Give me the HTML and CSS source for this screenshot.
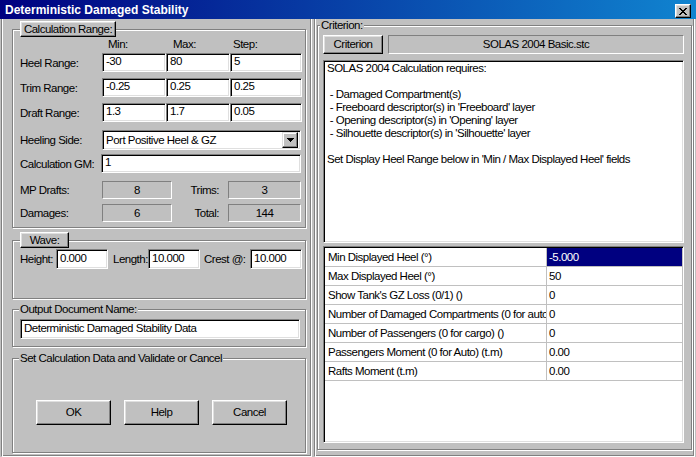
FILE: index.html
```html
<!DOCTYPE html>
<html>
<head>
<meta charset="utf-8">
<link rel="stylesheet" href="styles.css">
</head>
<body>
<div class="titlebar">
  <span class="title">Deterministic Damaged Stability</span>
  <span class="close"><svg width="8" height="7" viewBox="0 0 8 7" shape-rendering="crispEdges"><path d="M0 0h2v1H0zM6 0h2v1H6zM1 1h2v1H1zM5 1h2v1H5zM2 2h4v1H2zM3 3h2v1H3zM2 4h4v1H2zM1 5h2v1H1zM5 5h2v1H5zM0 6h2v1H0zM6 6h2v1H6z" fill="#000"/></svg></span>
</div>
<div class="main">
  <div class="panel panel-left">
    <fieldset class="group group-calc">
      <legend class="legend-btn legend-calc">Calculation Range:</legend>
      <div class="range-head"><span class="h-min">Min:</span><span class="h-max">Max:</span><span class="h-step">Step:</span></div>
      <div class="range-row row-heel"><span class="lbl">Heel Range:</span><span class="field f-min">-30</span><span class="field f-max">80</span><span class="field f-step">5</span></div>
      <div class="range-row row-next"><span class="lbl">Trim Range:</span><span class="field f-min">-0.25</span><span class="field f-max">0.25</span><span class="field f-step">0.25</span></div>
      <div class="range-row row-next"><span class="lbl">Draft Range:</span><span class="field f-min">1.3</span><span class="field f-max">1.7</span><span class="field f-step">0.05</span></div>
      <div class="range-row row-select"><span class="lbl">Heeling Side:</span>
        <div class="select"><span class="select-text">Port Positive Heel &amp; GZ</span><span class="select-btn"><svg width="7" height="4" viewBox="0 0 7 4" shape-rendering="crispEdges"><path d="M0 0h7v1H0zM1 1h5v1H1zM2 2h3v1H2zM3 3h1v1H3z" fill="#000"/></svg></span></div>
      </div>
      <div class="range-row row-gm"><span class="lbl lbl-gm">Calculation GM:</span><span class="field f-wide">1</span></div>
      <div class="range-row row-mp"><span class="lbl">MP Drafts:</span><span class="stat s1">8</span><span class="lbl2">Trims:</span><span class="stat s2">3</span></div>
      <div class="range-row row-dam"><span class="lbl">Damages:</span><span class="stat s1">6</span><span class="lbl2">Total:</span><span class="stat s2">144</span></div>
    </fieldset>

    <fieldset class="group group-wave">
      <legend class="legend-btn legend-wave">Wave:</legend>
      <div class="wave-row">
        <span class="wl wl-h">Height:</span><span class="field f-wave">0.000</span>
        <span class="wl wl-l">Length:</span><span class="field f-wave">10.000</span>
        <span class="wl wl-c">Crest @:</span><span class="field f-wave">10.000</span>
      </div>
    </fieldset>

    <fieldset class="group group-out">
      <legend class="legend-text">Output Document Name:</legend>
      <span class="field f-out">Deterministic Damaged Stability Data</span>
    </fieldset>

    <fieldset class="group group-set">
      <legend class="legend-text">Set Calculation Data and Validate or Cancel</legend>
      <div class="btn-row">
        <span class="btn btn-dlg">OK</span>
        <span class="btn btn-dlg">Help</span>
        <span class="btn btn-dlg">Cancel</span>
      </div>
    </fieldset>
  </div>

  <div class="panel panel-right">
    <fieldset class="group group-crit">
      <legend class="legend-text legend-crit">Criterion:</legend>
      <div class="crit-top">
        <span class="btn btn-crit">Criterion</span>
        <span class="crit-file">SOLAS 2004 Basic.stc</span>
      </div>
      <div class="memo">SOLAS 2004 Calculation requires:

 - Damaged Compartment(s)
 - Freeboard descriptor(s) in 'Freeboard' layer
 - Opening descriptor(s) in 'Opening' layer
 - Silhouette descriptor(s) in 'Silhouette' layer

Set Display Heel Range below in 'Min / Max Displayed Heel' fields</div>
      <div class="grid">
        <div class="cell c1">Min Displayed Heel (°)</div><div class="cell c2 sel">-5.000</div>
        <div class="cell c1">Max Displayed Heel (°)</div><div class="cell c2">50</div>
        <div class="cell c1">Show Tank's GZ Loss (0/1) ()</div><div class="cell c2">0</div>
        <div class="cell c1">Number of Damaged Compartments (0 for auto) ()</div><div class="cell c2">0</div>
        <div class="cell c1">Number of Passengers (0 for cargo) ()</div><div class="cell c2">0</div>
        <div class="cell c1">Passengers Moment (0 for Auto) (t.m)</div><div class="cell c2">0.00</div>
        <div class="cell c1">Rafts Moment (t.m)</div><div class="cell c2">0.00</div>
      </div>
    </fieldset>
  </div>
</div>
</body>
</html>
```

FILE: styles.css
```css
* { box-sizing: border-box; }
html, body { margin: 0; padding: 0; }
body {
  width: 696px;
  height: 457px;
  overflow: hidden;
  background: #c0c0c0;
  font-family: "Liberation Sans", Arial, sans-serif;
  font-size: 11.5px;
  letter-spacing: -0.5px;
  color: #000;
  white-space: nowrap;
}

/* title bar */
.titlebar {
  height: 19px;
  background: linear-gradient(to right, #000080, #1084d0);
  display: flex;
  justify-content: space-between;
  align-items: flex-start;
  padding: 0 5px 0 5px;
}
.title {
  color: #fff;
  font-weight: bold;
  font-size: 12px;
  letter-spacing: 0;
  line-height: 20px;
}
.close {
  margin-top: 4px;
  width: 16px;
  height: 14px;
  background: #c0c0c0;
  border: 1px solid;
  border-color: #fff #000 #000 #fff;
  box-shadow: inset -1px -1px #808080, inset 1px 1px #dfdfdf;
  display: flex;
  align-items: center;
  justify-content: center;
}
.close svg { display: block; }

/* main */
.main {
  display: flex;
  gap: 2px;
  height: 438px;
  padding: 0 1px 0 1px;
}
.panel {
  height: 438px;
  border-style: solid;
  border-width: 0 1px 1px 1px;
  border-color: #fff #fff #fff #808080;
  box-shadow: inset 1px 0 #fff, inset -1px -1px #808080;
}
.panel-left { width: 311px; }
.panel-right { flex: 1; }

/* group boxes */
.group {
  margin: 0;
  min-width: 0;
  border: 1px solid #808080;
  box-shadow: inset 1px 1px #fff, 1px 1px #fff;
  padding: 0 3px 0 7px;
}
.panel-left .group { margin-left: 10px; width: 294px; }
.group-calc { margin-top: 2px; padding-top: 1px; padding-bottom: 5px; }
.group-wave { margin-top: 4px; padding-top: 1px; padding-bottom: 29px; }
.group-out { margin-top: 4px; padding-top: 3px; padding-bottom: 7px; }
.group-set { margin-top: 5px; padding-top: 35px; padding-bottom: 27px; }

.legend-btn {
  padding: 0;
  height: 16px;
  line-height: 14px;
  display: flex;
  justify-content: center;
  background: #c0c0c0;
  border: 1px solid;
  border-color: #fff #000 #000 #fff;
  box-shadow: inset -1px -1px #808080, inset 1px 1px #dfdfdf;
}
.legend-calc { width: 96px; }
.legend-wave { width: 49px; }
.legend-text {
  padding: 0 1px;
  margin-left: -1px;
  line-height: 13px;
  background: #c0c0c0;
}

/* calc range */
.range-head {
  display: flex;
  height: 12px;
  line-height: 12px;
  padding-left: 82px;
}
.range-head span { display: block; }
.h-min { width: 64px; padding-left: 6px; }
.h-max { width: 64px; padding-left: 7px; }
.h-step { width: 72px; padding-left: 3px; }

.range-row { display: flex; align-items: center; }
.row-heel { margin-top: 3px; }
.row-next { margin-top: 6px; }
.row-select { margin-top: 8px; }
.row-gm { margin-top: 4px; }
.row-mp { margin-top: 8px; }
.row-dam { margin-top: 5px; }

.lbl { width: 82px; flex: none; }
.lbl-gm { width: 81px; }

.field {
  display: block;
  flex: none;
  height: 19px;
  line-height: 15px;
  padding: 0 3px;
  background: #fff;
  border: 1px solid;
  border-color: #808080 #fff #fff #808080;
  box-shadow: inset 1px 1px #000, inset -1px -1px #dfdfdf;
  overflow: hidden;
}
.f-min, .f-max { width: 64px; }
.f-step { width: 72px; }
.f-wide { width: 200px; }

.select {
  width: 199px;
  height: 20px;
  flex: none;
  display: flex;
  align-items: center;
  background: #fff;
  border: 1px solid;
  border-color: #808080 #fff #fff #808080;
  box-shadow: inset 1px 1px #000, inset -1px -1px #dfdfdf;
  padding: 0 2px 0 3px;
}
.select-text { flex: 1; line-height: 16px; }
.select-btn {
  width: 16px;
  height: 16px;
  background: #c0c0c0;
  border: 1px solid;
  border-color: #dfdfdf #000 #000 #dfdfdf;
  box-shadow: inset -1px -1px #808080, inset 1px 1px #fff;
  display: flex;
  align-items: center;
  justify-content: center;
}
.select-btn svg { display: block; }

.stat {
  display: block;
  flex: none;
  height: 18px;
  line-height: 16px;
  text-align: center;
  border: 1px solid;
  border-color: #808080 #fff #fff #808080;
}
.s1 { width: 70px; }
.s2 { width: 73px; }
.lbl2 { width: 56px; flex: none; text-align: right; padding-right: 9px; }

/* wave */
.wave-row { display: flex; align-items: center; }
.wl { flex: none; }
.wl-h { width: 36px; }
.wl-l { width: 35px; margin-left: 5px; }
.wl-c { width: 46px; margin-left: 4px; }
.f-wave { width: 52px; height: 20px; line-height: 16px; }

/* output */
.f-out { width: 280px; height: 20px; line-height: 16px; }

/* buttons */
.btn {
  display: block;
  background: #c0c0c0;
  text-align: center;
  border: 1px solid;
  border-color: #fff #000 #000 #fff;
  box-shadow: inset -1px -1px #808080, inset 1px 1px #dfdfdf;
}
.btn-row { display: flex; gap: 13px; padding-left: 16px; }
.btn-dlg { width: 75px; height: 25px; line-height: 23px; }

/* right column */
.group-crit {
  margin-left: 2px;
  width: 375px;
  padding: 3px 7px 6px 5px;
}
.legend-crit { margin-left: -3px; }
.crit-top { display: flex; height: 19px; gap: 5px; }
.btn-crit { width: 60px; height: 19px; line-height: 17px; }
.crit-file {
  flex: 1;
  height: 19px;
  line-height: 17px;
  text-align: center;
  border: 1px solid;
  border-color: #808080 #fff #fff #808080;
}
.memo {
  margin-top: 6px;
  height: 183px;
  background: #fff;
  border: 1px solid;
  border-color: #808080 #fff #fff #808080;
  box-shadow: inset 1px 1px #000, inset -1px -1px #dfdfdf;
  padding: 1px 3px;
  line-height: 13px;
  white-space: pre;
  overflow: hidden;
}
.grid {
  margin-top: 3px;
  height: 197px;
  background: #fff;
  border: 1px solid;
  border-color: #808080 #fff #fff #808080;
  box-shadow: inset 1px 1px #000, inset -1px -1px #dfdfdf;
  padding: 1px;
  display: grid;
  grid-template-columns: 222px 136px;
  grid-auto-rows: 19px;
  align-content: start;
}
.cell {
  border-right: 1px solid #c0c0c0;
  border-bottom: 1px solid #c0c0c0;
  line-height: 18px;
  overflow: hidden;
}
.c1 { padding-left: 3px; }
.c2 { padding-left: 2px; }
.sel { background: #000080; color: #fff; }
```
